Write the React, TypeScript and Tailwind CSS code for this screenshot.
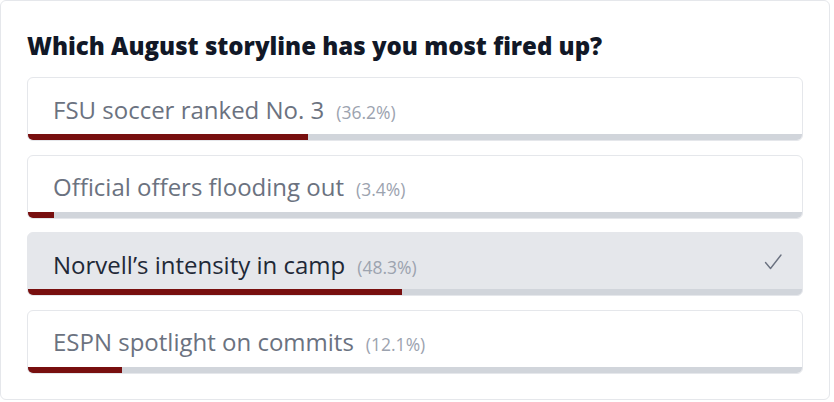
const options = [
  { label: "FSU soccer ranked No. 3", pct: 36.2, selected: false },
  { label: "Official offers flooding out", pct: 3.4, selected: false },
  { label: "Norvell\u2019s intensity in camp", pct: 48.3, selected: true },
  { label: "ESPN spotlight on commits", pct: 12.1, selected: false },
];

function Check() {
  return (
    <svg width="20" height="20" viewBox="0 0 20 20" fill="none" aria-hidden>
      <path d="M2.5 10.5l5 6L18 3" stroke="#6b7280" strokeWidth="1.4" strokeLinecap="round" strokeLinejoin="round" />
    </svg>
  );
}

export default function App() {
  return (
    <div className="h-[402px] w-[834px] bg-white" style={{ fontFamily: '"Open Sans", "Noto Sans", sans-serif' }}>
      <div className="h-[400px] w-[830px] rounded-md border border-[#e5e7eb] px-[26px] pt-[29px]">
        <h2 className="text-[24px] font-extrabold leading-[32px] text-[#111827]">
          Which August storyline has you most fired up?
        </h2>
        <div className="mt-[15px] flex flex-col gap-[13.67px]">
          {options.map((o) => (
            <div
              key={o.label}
              className={`flex h-[64px] flex-col overflow-hidden rounded-md border border-[#e5e7eb] ${
                o.selected ? "bg-[#e5e7eb]" : "bg-white"
              }`}
            >
              <div className="flex flex-1 items-center px-[25px] pt-[7px]">
                <div className="flex items-baseline">
                  <span className={`text-[24px] ${o.selected ? "text-[#1f2937]" : "text-[#6b7280]"}`}>{o.label}</span>
                  <span className="ml-[12px] text-[17.5px] text-[#9ca3af]">({o.pct}%)</span>
                </div>
                {o.selected && (
                  <span className="ml-auto mr-[-6px] mt-[-6px]">
                    <Check />
                  </span>
                )}
              </div>
              <div className="h-[6px] w-full bg-[#d1d5db]">
                <div className="h-full bg-[#780f0f]" style={{ width: `${o.pct}%` }} />
              </div>
            </div>
          ))}
        </div>
      </div>
    </div>
  );
}
